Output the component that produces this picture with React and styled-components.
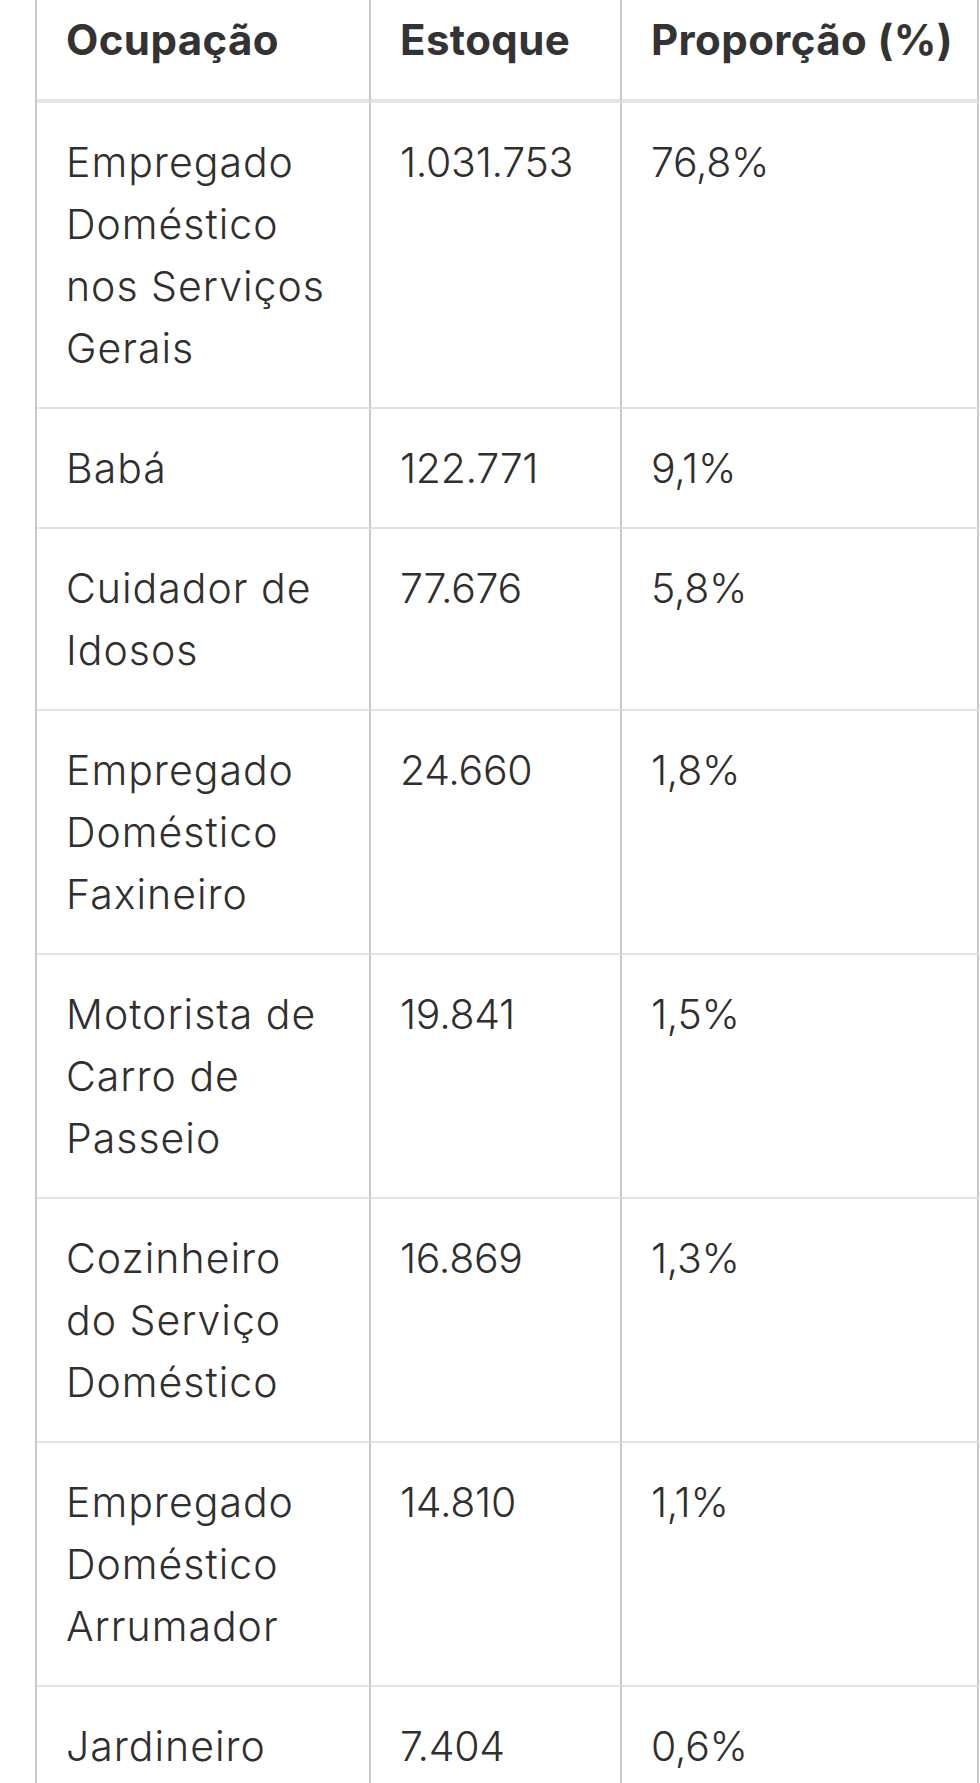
import React from "react";
import styled, { createGlobalStyle } from "styled-components";

const GlobalStyle = createGlobalStyle`
  html, body { margin: 0; padding: 0; background: #ffffff; }
  body { font-family: Inter, "Liberation Sans", sans-serif; color: #333333; overflow: hidden; }
`;

const Page = styled.main`
  padding-left: 35px;
  height: 1783px;
  overflow: hidden;
`;

const Table = styled.table`
  margin-top: -21px;
  width: 944px;
  table-layout: fixed;
  border-collapse: separate;
  border-spacing: 0;
  border-left: 2px solid #c9c9c9;
  border-top: 2px solid #c9c9c9;
  font-size: 41px;
  line-height: 62px;
`;

const HeadCell = styled.th`
  padding: 28px 29px;
  text-align: left;
  font-size: 42px;
  font-weight: 700;
  white-space: nowrap;
  letter-spacing: 0.4px;
  color: #333333;
  border-right: 2px solid #c9c9c9;
  border-bottom: 4px solid #e3e5e9;
`;

const Cell = styled.td`
  padding: 28px ${(p) => (p.$first ? 33 : 29)}px 28px 29px;
  vertical-align: top;
  font-weight: 350;
  letter-spacing: ${(p) => (p.$first ? "1px" : "-0.3px")};
  color: #2f2f2f;
  border-right: 2px solid #c9c9c9;
  border-bottom: 2px solid #e3e3e3;
`;

const rows = [
  ["Empregado Doméstico nos Serviços Gerais", "1.031.753", "76,8%"],
  ["Babá", "122.771", "9,1%"],
  ["Cuidador de Idosos", "77.676", "5,8%"],
  ["Empregado Doméstico Faxineiro", "24.660", "1,8%"],
  ["Motorista de Carro de Passeio", "19.841", "1,5%"],
  ["Cozinheiro do Serviço Doméstico", "16.869", "1,3%"],
  ["Empregado Doméstico Arrumador", "14.810", "1,1%"],
  ["Jardineiro", "7.404", "0,6%"],
];

export default function App() {
  return (
    <>
      <GlobalStyle />
      <Page>
        <Table>
          <colgroup>
            <col style={{ width: 334 }} />
            <col style={{ width: 251 }} />
            <col style={{ width: 357 }} />
          </colgroup>
          <thead>
            <tr>
              <HeadCell>Ocupação</HeadCell>
              <HeadCell>Estoque</HeadCell>
              <HeadCell>Proporção (%)</HeadCell>
            </tr>
          </thead>
          <tbody>
            {rows.map(([a, b, c]) => (
              <tr key={a}>
                <Cell $first>{a}</Cell>
                <Cell>{b}</Cell>
                <Cell>{c}</Cell>
              </tr>
            ))}
          </tbody>
        </Table>
      </Page>
    </>
  );
}
